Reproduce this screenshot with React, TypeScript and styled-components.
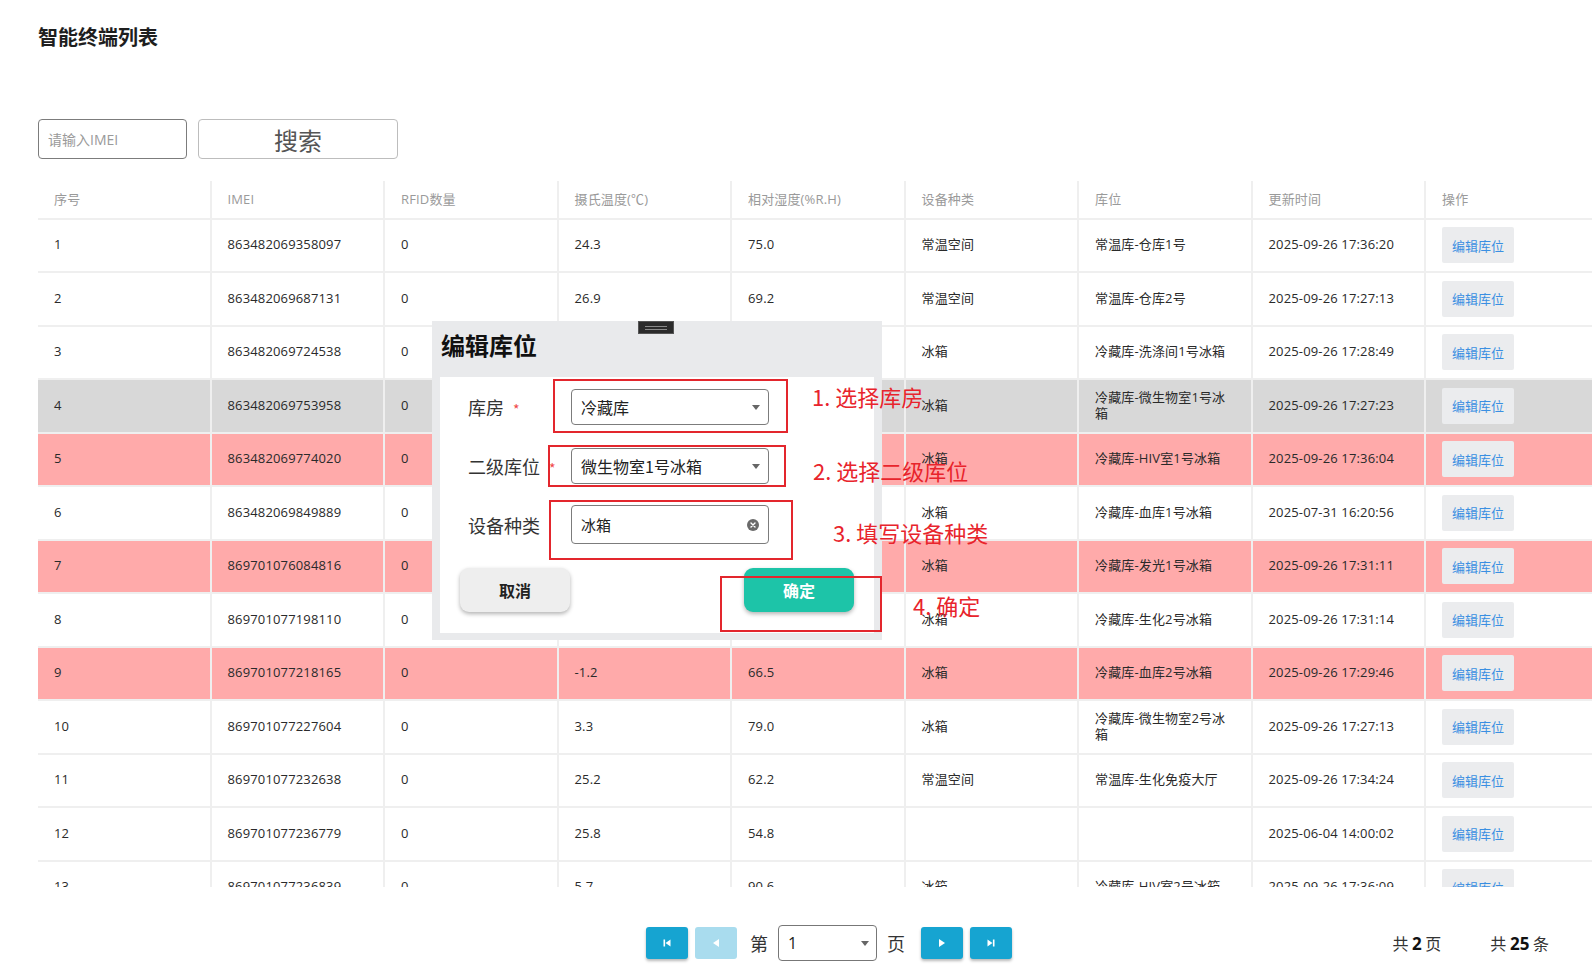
import React from 'react';
import styled, { createGlobalStyle } from 'styled-components';

const GlobalStyle = createGlobalStyle`
  html, body { margin: 0; padding: 0; background: #fff; }
  body {
    font-family: "Open Sans", "Noto Sans CJK SC", sans-serif;
    color: #333;
    overflow: hidden;
  }
  * { box-sizing: border-box; }
`;

interface Device {
  imei: string;
  rfid: string;
  temp: string;
  humidity: string;
  kind: string;
  location: string;
  updated: string;
  tone?: 'alert' | 'active';
}

const devices: Device[] = [
  { imei: '863482069358097', rfid: '0', temp: '24.3', humidity: '75.0', kind: '常温空间', location: '常温库-仓库1号', updated: '2025-09-26 17:36:20' },
  { imei: '863482069687131', rfid: '0', temp: '26.9', humidity: '69.2', kind: '常温空间', location: '常温库-仓库2号', updated: '2025-09-26 17:27:13' },
  { imei: '863482069724538', rfid: '0', temp: '4.1', humidity: '71.3', kind: '冰箱', location: '冷藏库-洗涤间1号冰箱', updated: '2025-09-26 17:28:49' },
  { imei: '863482069753958', rfid: '0', temp: '3.8', humidity: '68.0', kind: '冰箱', location: '冷藏库-微生物室1号冰箱', updated: '2025-09-26 17:27:23', tone: 'active' },
  { imei: '863482069774020', rfid: '0', temp: '-0.6', humidity: '80.2', kind: '冰箱', location: '冷藏库-HIV室1号冰箱', updated: '2025-09-26 17:36:04', tone: 'alert' },
  { imei: '863482069849889', rfid: '0', temp: '4.5', humidity: '66.1', kind: '冰箱', location: '冷藏库-血库1号冰箱', updated: '2025-07-31 16:20:56' },
  { imei: '869701076084816', rfid: '0', temp: '-1.0', humidity: '70.4', kind: '冰箱', location: '冷藏库-发光1号冰箱', updated: '2025-09-26 17:31:11', tone: 'alert' },
  { imei: '869701077198110', rfid: '0', temp: '5.2', humidity: '63.7', kind: '冰箱', location: '冷藏库-生化2号冰箱', updated: '2025-09-26 17:31:14' },
  { imei: '869701077218165', rfid: '0', temp: '-1.2', humidity: '66.5', kind: '冰箱', location: '冷藏库-血库2号冰箱', updated: '2025-09-26 17:29:46', tone: 'alert' },
  { imei: '869701077227604', rfid: '0', temp: '3.3', humidity: '79.0', kind: '冰箱', location: '冷藏库-微生物室2号冰箱', updated: '2025-09-26 17:27:13' },
  { imei: '869701077232638', rfid: '0', temp: '25.2', humidity: '62.2', kind: '常温空间', location: '常温库-生化免疫大厅', updated: '2025-09-26 17:34:24' },
  { imei: '869701077236779', rfid: '0', temp: '25.8', humidity: '54.8', kind: '', location: '', updated: '2025-06-04 14:00:02' },
  { imei: '869701077236839', rfid: '0', temp: '5.7', humidity: '90.6', kind: '冰箱', location: '冷藏库-HIV室2号冰箱', updated: '2025-09-26 17:36:09' },
];

const columns = ['序号', 'IMEI', 'RFID数量', '摄氏温度(℃)', '相对湿度(%R.H)', '设备种类', '库位', '更新时间', '操作'];

const Page = styled.div`
  position: relative;
  width: 1592px;
  height: 979px;
  overflow: hidden;
  padding: 23px 0 0 38px;
`;

const Title = styled.h1`
  margin: 0;
  font-family: "Noto Sans CJK SC", sans-serif;
  font-size: 20px;
  line-height: 28px;
  font-weight: 700;
  color: #1e1e1e;
`;

const SearchBar = styled.div`
  display: flex;
  gap: 11px;
  margin-top: 68px;
  height: 40px;
`;

const SearchInput = styled.input`
  width: 149px;
  height: 40px;
  border: 1px solid #7c7c7c;
  border-radius: 4px;
  padding: 0 9px;
  font-family: "Open Sans", "Noto Sans CJK SC", sans-serif;
  font-size: 14px;
  outline: none;
  &::placeholder { color: #9a9a9a; }
`;

const SearchButton = styled.button`
  width: 200px;
  height: 40px;
  border: 1px solid #bdbdbd;
  border-radius: 4px;
  background: #fff;
  color: #555;
  font-family: "Noto Sans CJK SC", sans-serif;
  font-size: 24px;
  padding: 0;
`;

const TableWrap = styled.div`
  margin-top: 22px;
  width: 1562px;
  height: 706px;
  overflow: hidden;
`;

const Row = styled.div<{ $tone?: 'alert' | 'active'; $head?: boolean }>`
  display: grid;
  grid-template-columns: repeat(9, 173.5px);
  height: ${p => (p.$head ? '38.5px' : '53.5px')};
  background: ${p => (p.$tone === 'alert' ? '#ffaaaa' : p.$tone === 'active' ? '#d8d8d8' : '#fff')};
`;

const Cell = styled.div<{ $head?: boolean }>`
  display: flex;
  align-items: center;
  padding: 0 24px 0 16px;
  border-right: 2px solid #efefef;
  border-bottom: 2px solid #efefef;
  font-size: 13px;
  letter-spacing: 0.15px;
  line-height: 1.2;
  color: ${p => (p.$head ? '#9a9a9a' : '#2a2a2a')};
  ${p => (p.$head ? 'padding-top: 2px;' : '')}
`;

const EditButton = styled.button`
  width: 72px;
  height: 36px;
  border: none;
  border-radius: 2px;
  background: #ebecee;
  color: #3a8fe2;
  font-family: "Noto Sans CJK SC", sans-serif;
  font-size: 13px;
  padding: 0;
`;

const Footer = styled.div`
  display: flex;
  align-items: center;
  margin-top: 38px;
  margin-left: -38px;
  height: 36px;
  padding: 0 43px 0 646px;
`;

const Pager = styled.div`
  display: flex;
  align-items: center;
`;

const PageButton = styled.button<{ $disabled?: boolean; $gap?: number }>`
  width: 42px;
  height: 32px;
  border: none;
  border-radius: 3px;
  padding: 0;
  margin-left: ${p => p.$gap ?? 0}px;
  display: flex;
  align-items: center;
  justify-content: center;
  background: ${p => (p.$disabled ? '#a9dcee' : '#16a4d1')};
  box-shadow: ${p => (p.$disabled ? 'none' : '0 2px 3px rgba(0, 0, 0, 0.28)')};
`;

const PagerWord = styled.span<{ $gap: number }>`
  font-family: "Noto Sans CJK SC", sans-serif;
  font-size: 18px;
  color: #333;
  margin-left: ${p => p.$gap}px;
`;

const PageSelect = styled.div`
  position: relative;
  width: 99px;
  height: 36px;
  margin-left: 10px;
  border: 1px solid #777;
  border-radius: 4px;
  display: flex;
  align-items: center;
  padding-left: 9px;
  font-size: 16px;
  color: #222;
`;

const Caret = styled.span<{ $right: number }>`
  position: absolute;
  right: ${p => p.$right}px;
  top: 50%;
  margin-top: -2px;
  border-left: 4px solid transparent;
  border-right: 4px solid transparent;
  border-top: 5px solid #666;
`;

const Totals = styled.div`
  margin-left: auto;
  display: flex;
  gap: 49px;
  font-family: "Noto Sans CJK SC", sans-serif;
  font-size: 16px;
  color: #333;
  b { font-family: "Open Sans", sans-serif; font-size: 17px; font-weight: 700; color: #111; }
`;

/* dialog */
const Dialog = styled.div`
  position: absolute;
  left: 432px;
  top: 321px;
  width: 450px;
  height: 319px;
  background: #e9eaec;
  padding: 0 8px 7px 8px;
  display: flex;
  flex-direction: column;
`;

const DragHandle = styled.div`
  position: absolute;
  left: 206px;
  top: 0;
  width: 36px;
  height: 13px;
  background: #2b2b2b;
  border: 1px solid #555;
  &::after {
    content: '';
    position: absolute;
    left: 6px;
    right: 6px;
    top: 4px;
    height: 2px;
    border-top: 1px solid #8a8a8a;
    border-bottom: 1px solid #8a8a8a;
  }
`;

const DialogTitle = styled.div`
  height: 56px;
  padding: 12px 0 0 1px;
  font-family: "Noto Sans CJK SC", sans-serif;
  font-size: 24px;
  line-height: 24px;
  font-weight: 700;
  color: #111;
`;

const DialogBody = styled.div`
  flex: 1;
  background: #fff;
  padding: 0 20px 0 0;
`;

const FormRow = styled.div`
  display: grid;
  grid-template-columns: 131px 198px;
  align-items: center;
  height: 59px;
`;

const Label = styled.div`
  padding-left: 28px;
  font-family: "Noto Sans CJK SC", sans-serif;
  font-size: 18px;
  color: #333;
  white-space: nowrap;
  span { color: #f04848; font-size: 14px; margin-left: 9px; }
`;

const Control = styled.div<{ $tall?: boolean }>`
  position: relative;
  height: ${p => (p.$tall ? '39px' : '36px')};
  border: 1px solid #7c7c7c;
  border-radius: 4px;
  display: flex;
  align-items: center;
  padding-left: 9px;
  font-family: "Noto Sans CJK SC", sans-serif;
  font-size: ${p => (p.$tall ? '15px' : '16px')};
  color: #222;
`;

const ClearIcon = styled.svg`
  position: absolute;
  right: 9px;
  top: 50%;
  margin-top: -6px;
`;

const ButtonRow = styled.div`
  display: flex;
  justify-content: space-between;
  margin-top: 14px;
  padding-left: 20px;
`;

const DialogButton = styled.button<{ $primary?: boolean }>`
  width: 110px;
  height: 44px;
  border: none;
  border-radius: 9px;
  font-family: "Noto Sans CJK SC", sans-serif;
  font-size: 16px;
  font-weight: 700;
  color: ${p => (p.$primary ? '#fff' : '#222')};
  background: ${p => (p.$primary ? '#1dc4a8' : '#eeeeee')};
  box-shadow: 0 2px 4px rgba(0, 0, 0, 0.3);
`;

/* annotations drawn over the screenshot */
const Mark = styled.div`
  position: absolute;
  border: 2px solid #e3262d;
`;

const Note = styled.div`
  position: absolute;
  font-family: "Noto Sans CJK SC", sans-serif;
  font-size: 22px;
  line-height: 30px;
  color: #e8242c;
  white-space: nowrap;
`;

const PagerIcon = ({ kind }: { kind: 'first' | 'prev' | 'next' | 'last' }) => (
  <svg width="10" height="10" viewBox="0 0 10 10">
    {kind === 'first' && (
      <>
        <rect x="1.5" y="1.5" width="1.6" height="7" fill="#fff" />
        <path d="M8.5 1.5 L3.5 5 L8.5 8.5 Z" fill="#fff" />
      </>
    )}
    {kind === 'prev' && <path d="M8 1 L2 5 L8 9 Z" fill="#fff" />}
    {kind === 'next' && <path d="M2 1 L8 5 L2 9 Z" fill="#fff" />}
    {kind === 'last' && (
      <>
        <path d="M1.5 1.5 L6.5 5 L1.5 8.5 Z" fill="#fff" />
        <rect x="6.9" y="1.5" width="1.6" height="7" fill="#fff" />
      </>
    )}
  </svg>
);

export default function App() {
  return (
    <Page>
      <GlobalStyle />
      <Title>智能终端列表</Title>

      <SearchBar>
        <SearchInput placeholder="请输入IMEI" />
        <SearchButton>搜索</SearchButton>
      </SearchBar>

      <TableWrap>
        <Row $head>
          {columns.map(c => (
            <Cell key={c} $head>{c}</Cell>
          ))}
        </Row>
        {devices.map((d, i) => (
          <Row key={d.imei} $tone={d.tone}>
            <Cell>{i + 1}</Cell>
            <Cell>{d.imei}</Cell>
            <Cell>{d.rfid}</Cell>
            <Cell>{d.temp}</Cell>
            <Cell>{d.humidity}</Cell>
            <Cell>{d.kind}</Cell>
            <Cell>{d.location}</Cell>
            <Cell>{d.updated}</Cell>
            <Cell>
              <EditButton>编辑库位</EditButton>
            </Cell>
          </Row>
        ))}
      </TableWrap>

      <Footer>
        <Pager>
          <PageButton><PagerIcon kind="first" /></PageButton>
          <PageButton $disabled $gap={7}><PagerIcon kind="prev" /></PageButton>
          <PagerWord $gap={13}>第</PagerWord>
          <PageSelect>
            1
            <Caret $right={7} />
          </PageSelect>
          <PagerWord $gap={10}>页</PagerWord>
          <PageButton $gap={16}><PagerIcon kind="next" /></PageButton>
          <PageButton $gap={7}><PagerIcon kind="last" /></PageButton>
        </Pager>
        <Totals>
          <span>共 <b>2</b> 页</span>
          <span>共 <b>25</b> 条</span>
        </Totals>
      </Footer>

      <Dialog>
        <DragHandle />
        <DialogTitle>编辑库位</DialogTitle>
        <DialogBody>
          <FormRow>
            <Label>库房<span>*</span></Label>
            <Control>
              冷藏库
              <Caret $right={8} />
            </Control>
          </FormRow>
          <FormRow>
            <Label>二级库位<span>*</span></Label>
            <Control>
              微生物室1号冰箱
              <Caret $right={8} />
            </Control>
          </FormRow>
          <FormRow>
            <Label>设备种类</Label>
            <Control $tall>
              冰箱
              <ClearIcon width="12" height="12" viewBox="0 0 12 12">
                <circle cx="6" cy="6" r="6" fill="#6a6a6a" />
                <path d="M4 4 L8 8 M8 4 L4 8" stroke="#fff" strokeWidth="1.4" strokeLinecap="round" />
              </ClearIcon>
            </Control>
          </FormRow>
          <ButtonRow>
            <DialogButton>取消</DialogButton>
            <DialogButton $primary>确定</DialogButton>
          </ButtonRow>
        </DialogBody>
      </Dialog>

      <Mark style={{ left: 553, top: 379, width: 235, height: 54 }} />
      <Mark style={{ left: 548, top: 445, width: 238, height: 42 }} />
      <Mark style={{ left: 549, top: 500, width: 244, height: 60 }} />
      <Mark style={{ left: 720, top: 576, width: 162, height: 56 }} />
      <Note style={{ left: 812, top: 381 }}>1. 选择库房</Note>
      <Note style={{ left: 813, top: 455 }}>2. 选择二级库位</Note>
      <Note style={{ left: 833, top: 517 }}>3. 填写设备种类</Note>
      <Note style={{ left: 913, top: 590 }}>4. 确定</Note>
    </Page>
  );
}
